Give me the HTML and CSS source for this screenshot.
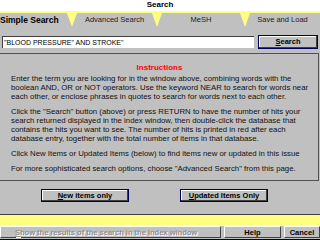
FILE: index.html
```html
<!doctype html>
<html>
<head>
	<meta charset=utf-8>
	<link rel="stylesheet" href="styles.css">
</head>
<body>

<div class=titlebar>Search</div>

<div class=tabs>
	<div class="tab first selected">Simple Search</div>
	<div class="tab adv">Advanced Search</div>
	<div class="tab mesh">MeSH</div>
	<div class="tab last">Save and Load</div>
</div>

<div class=searchrow>
	<div class=query>"BLOOD PRESSURE" AND STROKE"</div>
	<div class="btn default searchbtn"><u>S</u>earch</div>
</div>

<div class=panel>
	<div class=heading>Instructions</div>
	<p>Enter the term you are looking for in the window above, combining words with the<br>
	boolean AND, OR or NOT operators. Use the keyword NEAR to search for words near<br>
	each other, or enclose phrases in quotes to search for words next to each other.</p>
	<p>Click the "Search" button (above) or press RETURN to have the number of hits your<br>
	search returned displayed in the index window, then double-click the database that<br>
	contains the hits you want to see. The number of hits is printed in red after each<br>
	database entry, together with the total number of items in that database.</p>
	<p>Click New Items or Updated Items (below) to find items new or updated in this issue</p>
	<p>For more sophisticated search options, choose "Advanced Search" from this page.</p>
</div>

<div class=itemrow>
	<div class="btn default itembtn"><u>N</u>ew items only</div>
	<div class="btn default itembtn"><u>U</u>pdated Items Only</div>
</div>

<div class=band></div>

<div class=bottombar>
	<div class="btn disabled showbtn"><u>S</u>how the results of the search in the Index window</div>
	<div class="btn helpbtn">Help</div>
	<div class="btn cancelbtn">Cancel</div>
</div>

<div class=band2></div>

</body>
</html>
```

FILE: styles.css
```css
html, body { margin: 0; padding: 0; height: 100%; overflow: hidden; }
body { background: #c0c0c0; font: 8px "Liberation Sans", Arial, sans-serif; color: #000; width: 320px; height: 240px; }

.titlebar { background: #fff; height: 11px; line-height: 10px; text-align: center; font-weight: bold; font-size: 8px; }

.tabs { display: flex; background: #ffff80; height: 16px; padding-top: 2px; box-sizing: border-box; }
.tab { background: #c0c0c0; height: 14px; line-height: 14px; text-align: center; font-size: 7.5px; color: #202020;
	clip-path: polygon(5px 0, calc(100% - 5px) 0, 100% 100%, 0 100%); }
.tab.first { width: 72px; text-align: left; clip-path: polygon(0 0, calc(100% - 5px) 0, 100% 100%, 0 100%); }
.tab.selected { font-weight: bold; font-size: 8.5px; color: #000; }
.tab.adv { width: 85px; }
.tab.mesh { width: 88px; }
.tab.last { flex: 1; clip-path: polygon(5px 0, 100% 0, 100% 100%, 0 100%); }

.searchrow { display: flex; align-items: center; padding: 7px 2px 0 2px; height: 15px; }
.query { flex: 1; height: 12px; line-height: 12px; background: #fff; box-sizing: border-box; padding-left: 1px;
	border-top: 1px solid #404040; border-left: 1px solid #404040; font-size: 7px; }
.btn { display: flex; align-items: center; justify-content: center; box-sizing: border-box; background: #c0c0c0;
	border: 1px solid; border-color: #fff #404040 #404040 #fff; }
.btn.default { border: 1px solid #000060; box-shadow: inset -1px -1px #404040, inset 1px 1px #fff; font-weight: bold; font-size: 7.5px; }
.searchbtn { width: 60px; height: 14px; margin-left: 4px; }

.panel { margin-top: 4px; height: 128px; box-sizing: border-box; border: 1px solid #505050; border-left: none; margin-right: 1px;
	padding: 9px 0 0 11px; }
.heading { color: #ff0000; font-weight: bold; text-align: center; font-size: 8px; margin-bottom: 2px; padding-right: 10px; }
.panel p { margin: 0 0 6px 0; line-height: 9px; font-size: 7.8px; color: #101010; white-space: nowrap; }

.itemrow { display: flex; padding: 8px 0 0 41px; gap: 51px; }
.itembtn { width: 88px; height: 13px; }

.band { margin-top: 12px; height: 11px; background: #ffff80; border-top: 1px solid #404040; box-sizing: border-box; }
.bottombar { display: flex; height: 13px; border-top: 1px solid #fff; border-bottom: 1px solid #000040; gap: 3px; }
.bottombar .btn { height: 12px; font-size: 7.5px; font-weight: bold; }
.showbtn { width: 221px; color: #909090; text-shadow: 1px 1px #fff; justify-content: flex-start; padding-left: 14px; }
.helpbtn { width: 57px; }
.cancelbtn { flex: 1; }
.band2 { height: 3px; background: #ffff80; }
```
